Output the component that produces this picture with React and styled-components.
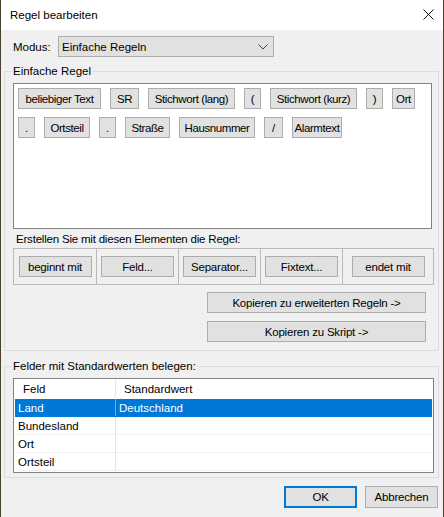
import React from 'react';
import styled, { createGlobalStyle } from 'styled-components';

const Global = createGlobalStyle`
    html, body {
        margin: 0;
        padding: 0;
        background: #4b4330;
    }
    body {
        font-family: "Liberation Sans", Arial, sans-serif;
        font-size: 11.5px;
        color: #000;
    }
`

const Window = styled.div`
    width: 442px;
    height: 517px;
    margin-left: 1px;
    background: #f0f0f0;
    display: flex;
    flex-direction: column;
    overflow: hidden;
`

const TitleBar = styled.div`
    height: 30px;
    flex-shrink: 0;
    background: #fff;
    display: flex;
    align-items: center;
    justify-content: space-between;
    padding: 0 9px 0 9px;
    font-size: 11.5px;
`

const CloseIcon = styled.svg`
    width: 11px;
    height: 11px;
    margin-top: -1px;
`

const ModusRow = styled.div`
    display: flex;
    align-items: center;
    margin: 6px 0 0 12px;
`

const Label = styled.span`
    width: ${p => p.$width || 'auto'};
    line-height: 14px;
`

const Select = styled.div`
    height: 19px;
    background: #e1e1e1;
    border: 1px solid #adadad;
    display: flex;
    align-items: center;
    justify-content: space-between;
    padding: 0 5px 0 3px;
    box-sizing: content-box;
    width: 206px;
`

const GroupBox = styled.fieldset`
    margin: ${p => p.$top}px 0 0 3px;
    width: 435px;
    box-sizing: border-box;
    border: 1px solid #dcdcdc;
    padding: 0 4px ${p => p.$bottom}px 8px;
    display: flex;
    flex-direction: column;
    min-width: 0;
`

const Legend = styled.legend`
    padding: 0 1px;
    margin-left: -1px;
    line-height: 14px;
`

const RulePanel = styled.div`
    margin-top: 5px;
    width: 419px;
    height: 146px;
    box-sizing: border-box;
    background: #fff;
    border: 1px solid #828282;
    padding: 4px 0 0 4px;
    display: flex;
    flex-wrap: wrap;
    align-content: flex-start;
    column-gap: 9px;
    row-gap: 8px;
`

const Token = styled.div`
    width: ${p => p.$w}px;
    height: 21px;
    box-sizing: border-box;
    background: #e1e1e1;
    border: 1px solid #adadad;
    display: flex;
    align-items: center;
    justify-content: center;
    white-space: nowrap;
    letter-spacing: -0.4px;
`

const Hint = styled.div`
    margin: 3px 0 0 3px;
    line-height: 14px;
    letter-spacing: -0.2px;
`

const Strip = styled.div`
    margin-top: 2px;
    width: 421px;
    height: 37px;
    box-sizing: border-box;
    border: 1px solid #b9b9b9;
    display: grid;
    grid-template-columns: 83px 82px 82px 82px 1fr;
`

const StripCell = styled.div`
    display: flex;
    align-items: center;
    justify-content: center;
    border-right: ${p => (p.$last ? 'none' : '1px solid #b9b9b9')};
`

const Button = styled.div`
    width: ${p => p.$w}px;
    height: ${p => p.$h || 21}px;
    box-sizing: border-box;
    background: #e1e1e1;
    border: ${p => (p.$default ? '2px solid #0078d7' : '1px solid #adadad')};
    display: flex;
    align-items: center;
    justify-content: center;
    white-space: nowrap;
    letter-spacing: -0.2px;
`

const CopyColumn = styled.div`
    display: flex;
    flex-direction: column;
    align-items: flex-end;
    gap: 8px;
    margin: 7px 8px 0 0;
`

const Table = styled.div`
    margin-top: 5px;
    width: 421px;
    height: 95px;
    box-sizing: border-box;
    background: #fff;
    border: 1px solid #828282;
    padding: 1px;
`

const Row = styled.div`
    display: grid;
    grid-template-columns: 101px 1fr;
    height: ${p => (p.$header ? 19 : 18)}px;
    box-sizing: border-box;
    background: ${p => (p.$selected ? '#0078d7' : '#fff')};
    color: ${p => (p.$selected ? '#fff' : '#000')};
    border-bottom: 1px solid ${p => (p.$header ? '#fff' : p.$selected ? '#0078d7' : '#f0f0f0')};
`

const Cell = styled.div`
    display: flex;
    align-items: center;
    padding-left: ${p => (p.$header ? 8 : 3)}px;
    border-right: ${p => (p.$first ? `1px solid ${p.$selected ? '#66aee6' : '#e5e5e5'}` : 'none')};
    white-space: nowrap;
`

const Footer = styled.div`
    display: flex;
    justify-content: flex-end;
    gap: 8px;
    margin: 8px 5px 0 0;
`

const row1 = [
    ['beliebiger Text', 83], ['SR', 29], ['Stichwort (lang)', 87], ['(', 17],
    ['Stichwort (kurz)', 87], [')', 17], ['Ort', 23],
]
const row2 = [
    ['.', 17], ['Ortsteil', 46], ['.', 17], ['Straße', 45], ['Hausnummer', 76],
    ['/', 19], ['Alarmtext', 50],
]
const elements = ['beginnt mit', 'Feld...', 'Separator...', 'Fixtext...', 'endet mit']
const fields = [['Land', 'Deutschland'], ['Bundesland', ''], ['Ort', ''], ['Ortsteil', '']]

export default function App() {
    return (
        <Window>
            <Global />
            <TitleBar>
                <span>Regel bearbeiten</span>
                <CloseIcon viewBox="0 0 11 11">
                    <path d="M0.5 0.5 L10.5 10.5 M10.5 0.5 L0.5 10.5" stroke="#111" strokeWidth="1" fill="none" />
                </CloseIcon>
            </TitleBar>
            <ModusRow>
                <Label $width="45px">Modus:</Label>
                <Select>
                    <span>Einfache Regeln</span>
                    <svg width="10" height="6" viewBox="0 0 10 6">
                        <path d="M0.5 0.5 L5 5 L9.5 0.5" stroke="#444" strokeWidth="1" fill="none" />
                    </svg>
                </Select>
            </ModusRow>
            <GroupBox $top={7} $bottom={8}>
                <Legend>Einfache Regel</Legend>
                <RulePanel>
                    {row1.concat(row2).map(([t, w], i) => (
                        <Token key={i} $w={w}>{t}</Token>
                    ))}
                </RulePanel>
                <Hint>Erstellen Sie mit diesen Elementen die Regel:</Hint>
                <Strip>
                    {elements.map((e, i) => (
                        <StripCell key={e} $last={i === elements.length - 1}>
                            <Button $w={73}>{e}</Button>
                        </StripCell>
                    ))}
                </Strip>
                <CopyColumn>
                    <Button $w={219}>Kopieren zu erweiterten Regeln -&gt;</Button>
                    <Button $w={219}>Kopieren zu Skript -&gt;</Button>
                </CopyColumn>
            </GroupBox>
            <GroupBox $top={8} $bottom={4}>
                <Legend>Felder mit Standardwerten belegen:</Legend>
                <Table>
                    <Row $header>
                        <Cell $header $first>Feld</Cell>
                        <Cell $header>Standardwert</Cell>
                    </Row>
                    {fields.map(([f, v], i) => (
                        <Row key={f} $selected={i === 0}>
                            <Cell $first $selected={i === 0}>{f}</Cell>
                            <Cell>{v}</Cell>
                        </Row>
                    ))}
                </Table>
            </GroupBox>
            <Footer>
                <Button $w={73} $h={22} $default>OK</Button>
                <Button $w={73} $h={22}>Abbrechen</Button>
            </Footer>
        </Window>
    );
}
